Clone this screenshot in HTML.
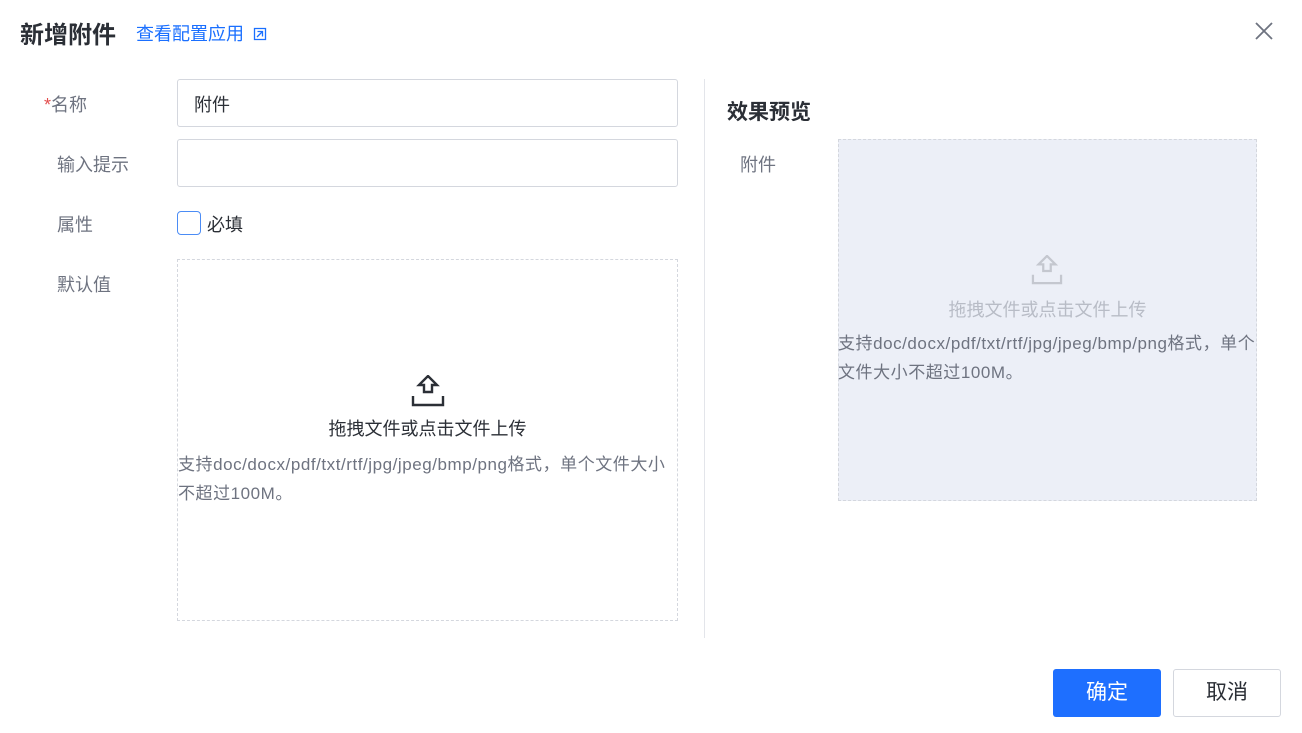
<!DOCTYPE html>
<html><head><meta charset="utf-8"><style>
*{margin:0;padding:0;box-sizing:border-box}
body{width:1302px;height:733px;background:#fff;font-family:"Liberation Sans","Noto Sans CJK SC",sans-serif;position:relative;overflow:hidden;color:#2b2f36}
.a{position:absolute;white-space:nowrap}
.lbl{font-size:18px;color:#6e7380}
.inp{position:absolute;border:1px solid #d4d7de;border-radius:3px;background:#fff}
.desc{font-size:17px;letter-spacing:0.55px;color:#6e7380;line-height:29px;white-space:normal}
</style></head><body>
<div class="a" style="left:20px;top:15px;font-size:24px;font-weight:bold;color:#2b2f36">新增附件</div>
<div class="a" style="left:136px;top:20px;font-size:18px;color:#1a6fff">查看配置应用
<svg width="14" height="14" viewBox="0 0 14 14" style="vertical-align:-1px;margin-left:4px"><path d="M1.5 1.5h11v11h-11zM4.5 4.5h5v5M9.5 9.5" fill="none" stroke="#1a6fff" stroke-width="1.3"/><path d="M4 10l5.5-5.5" stroke="#1a6fff" stroke-width="1.3"/></svg></div>
<svg class="a" style="left:1254px;top:21px" width="20" height="20" viewBox="0 0 20 20"><path d="M2 2L18 18M18 2L2 18" stroke="#6e7380" stroke-width="1.8"/></svg>

<div class="a lbl" style="left:44px;top:91px"><span style="color:#e34d4d">*</span>名称</div>
<div class="inp" style="left:177px;top:79px;width:501px;height:48px"></div>
<div class="a" style="left:194px;top:91px;font-size:18px;color:#2b2f36">附件</div>
<div class="a lbl" style="left:57px;top:151px">输入提示</div>
<div class="inp" style="left:177px;top:139px;width:501px;height:48px"></div>
<div class="a lbl" style="left:57px;top:211px">属性</div>
<div class="a" style="left:177px;top:211px;width:24px;height:24px;border:1.5px solid #4b8cf5;border-radius:4px"></div>
<div class="a" style="left:207px;top:211px;font-size:18px;color:#2b2f36">必填</div>
<div class="a lbl" style="left:57px;top:271px">默认值</div>
<div class="a" style="left:177px;top:259px;width:501px;height:362px;border:1px dashed #d4d7de"></div>
<svg class="a" style="left:411px;top:375px" width="34" height="32" viewBox="0 0 34 32"><path d="M13 17V10H8l9-9 9 9h-5v7z" fill="none" stroke="#2b2f36" stroke-width="2.4"/><path d="M2 21v9h30v-9" fill="none" stroke="#2b2f36" stroke-width="2.4"/></svg>
<div class="a" style="left:177px;width:501px;text-align:center;top:415px;font-size:18px;color:#2b2f36">拖拽文件或点击文件上传</div>
<div class="a desc" style="left:178px;top:450px;width:500px">支持doc/docx/pdf/txt/rtf/jpg/jpeg/bmp/png格式，单个文件大小不超过100M。</div>

<div class="a" style="left:704px;top:79px;width:1px;height:559px;background:#e3e5ea"></div>
<div class="a" style="left:727px;top:96px;font-size:21px;font-weight:bold;color:#2b2f36">效果预览</div>
<div class="a lbl" style="left:740px;top:151px">附件</div>
<div class="a" style="left:838px;top:139px;width:419px;height:362px;border:1px dashed #d4d7de;background:#eceff7"></div>
<svg class="a" style="left:1031px;top:255px" width="32" height="30" viewBox="0 0 34 32"><path d="M13 17V10H8l9-9 9 9h-5v7z" fill="none" stroke="#c4c7cf" stroke-width="2.4"/><path d="M2 21v9h30v-9" fill="none" stroke="#c4c7cf" stroke-width="2.4"/></svg>
<div class="a" style="left:838px;width:419px;text-align:center;top:296px;font-size:18px;color:#b8bcc6">拖拽文件或点击文件上传</div>
<div class="a desc" style="left:838px;top:329px;width:420px">支持doc/docx/pdf/txt/rtf/jpg/jpeg/bmp/png格式，单个文件大小不超过100M。</div>

<div class="a" style="left:1053px;top:669px;width:108px;height:48px;background:#1e6fff;border-radius:3px;color:#fff;font-size:21px;text-align:center;line-height:48px">确定</div>
<div class="a" style="left:1173px;top:669px;width:108px;height:48px;border:1px solid #d4d7de;border-radius:3px;color:#2b2f36;font-size:21px;text-align:center;line-height:46px">取消</div>
</body></html>
